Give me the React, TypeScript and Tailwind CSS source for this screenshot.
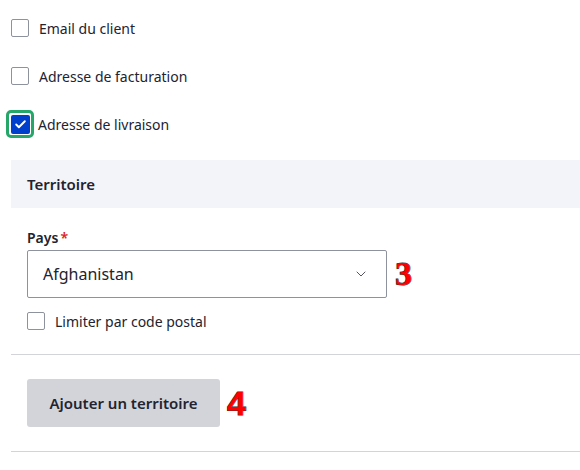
import { Check, ChevronDown } from 'lucide-react';

const font = { fontFamily: '"Noto Sans", "Open Sans", sans-serif' };

function Box({ checked = false, focused = false }: { checked?: boolean; focused?: boolean }) {
  if (checked) {
    return (
      <span className={`flex h-[28px] w-[28px] shrink-0 items-center justify-center rounded-[5px] ${focused ? 'border-[3px] border-[#26a769]' : ''}`}>
        <span className="flex h-[19px] w-[19px] items-center justify-center rounded-[2px] bg-[#003ecc]">
          <Check className="h-[13px] w-[13px] text-white" strokeWidth={3.5} />
        </span>
      </span>
    );
  }
  return <span className="h-[18px] w-[18px] shrink-0 rounded-[2px] border border-[#8e929c] bg-white" />;
}

function Marker({ n, serif }: { n: string; serif?: boolean }) {
  return (
    <span
      className="text-[34px] font-bold leading-none text-[#ff0000] [-webkit-text-stroke:1px_#333] [paint-order:stroke_fill]"
      style={{ fontFamily: serif ? '"Liberation Serif", serif' : '"Liberation Sans", sans-serif' }}
    >
      {n}
    </span>
  );
}

export default function App() {
  return (
    <div className="h-[470px] w-[580px] overflow-hidden bg-white text-[#222330]" style={font}>
      <div className="flex flex-col pt-[19px]">
        <label className="flex h-[18px] items-center gap-[10px] pl-[11px] text-[14px]">
          <Box />
          <span>Email du client</span>
        </label>
        <label className="mt-[30px] flex h-[18px] items-center gap-[10px] pl-[11px] text-[14px]">
          <Box />
          <span>Adresse de facturation</span>
        </label>
        <label className="mt-[25px] flex h-[28px] items-center gap-[4px] pl-[6px] text-[14px]">
          <Box checked focused />
          <span>Adresse de livraison</span>
        </label>
      </div>

      <div className="ml-[11px] mt-[22px]">
        <div className="flex h-[48px] items-center bg-[#f3f4f9] pl-[16px] text-[15px] font-semibold">Territoire</div>

        <div className="px-[16px] pt-[21px]">
          <div className="text-[14px] font-semibold leading-[18px]">
            Pays<span className="ml-[2px] text-[#dc2323]">*</span>
          </div>
          <div className="mt-[3px] flex items-center gap-[8px]">
            <div className="flex h-[48px] w-[360px] items-center justify-between rounded-[2px] border border-[#8e929c] pl-[15px] pr-[17px] text-[16px]">
              <span>Afghanistan</span>
              <ChevronDown className="h-[16px] w-[16px] text-[#545560]" strokeWidth={1.5} />
            </div>
            <Marker n="3" serif />
          </div>
          <label className="mt-[14px] flex h-[18px] items-center gap-[10px] text-[14px]">
            <Box />
            <span>Limiter par code postal</span>
          </label>
        </div>

        <div className="mt-[24px] border-t border-[#d3d4d9]" />

        <div className="flex items-center gap-[7px] px-[16px] pt-[24px]">
          <button
            type="button"
            className="flex h-[48px] w-[193px] items-center justify-center rounded-[3px] bg-[#d3d4d9] text-[15px] font-semibold text-[#222330]"
          >
            Ajouter un territoire
          </button>
          <Marker n="4" />
        </div>

        <div className="mt-[24px] border-t border-[#d3d4d9]" />
      </div>
    </div>
  );
}
